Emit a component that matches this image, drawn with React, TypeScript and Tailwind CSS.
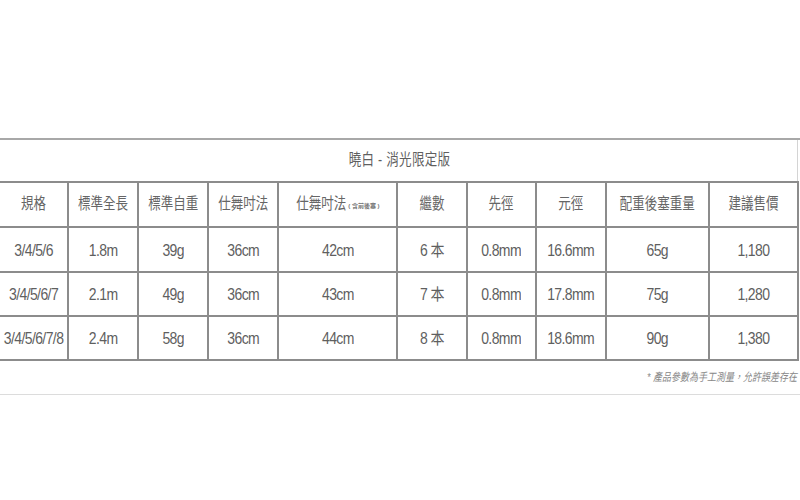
const cols = [68, 70, 70, 70, 119, 69, 69, 70, 103, 89]

const rows = [
  ['3/4/5/6', '1.8m', '39g', '36cm', '42cm', '6 本', '0.8mm', '16.6mm', '65g', '1,180'],
  ['3/4/5/6/7', '2.1m', '49g', '36cm', '43cm', '7 本', '0.8mm', '17.8mm', '75g', '1,280'],
  ['3/4/5/6/7/8', '2.4m', '58g', '36cm', '44cm', '8 本', '0.8mm', '18.6mm', '90g', '1,380'],
]

const headers = ['規格', '標準全長', '標準自重', '仕舞吋法', '仕舞吋法', '繼數', '先徑', '元徑', '配重後塞重量', '建議售價']

const cjk = "'Liberation Sans', 'Noto Sans CJK TC', sans-serif"

function Cell({ children, first }: { children: React.ReactNode; first?: boolean }) {
  return (
    <td
      className={
        'border-b-2 border-[#8c8c8c] text-center align-middle p-0 ' +
        (first ? '' : 'border-l-2')
      }
    >
      {children}
    </td>
  )
}

export default function App() {
  return (
    <div className="w-[800px] h-[500px] bg-white text-[#5f5f5f]" style={{ fontFamily: cjk }}>
      <div className="h-[138px]" />
      <div className="border-t-2 border-[#a8a8a8] w-full" />
      <div className="w-[798px] border-r border-[#d4d4d4] h-[41px] flex items-center justify-center">
        <span className="text-[12.5px] inline-block scale-y-125 tracking-[0.3px] pl-[2px]">曉白 - 消光限定版</span>
      </div>
      <table className="table-fixed border-collapse w-[799px] border-t-2 border-r-2 border-[#8c8c8c]">
        <colgroup>
          {cols.map((w, i) => (
            <col key={i} style={{ width: w }} />
          ))}
        </colgroup>
        <tbody>
          <tr className="h-[45px] text-[12.5px] text-[#666]">
            {headers.map((h, i) => (
              <Cell key={i} first={i === 0}>
                <span className="inline-block scale-y-125">{h}</span>
                {i === 4 && <span className="text-[6px] ml-[2px] font-bold text-[#777]">( 含前後塞 )</span>}
              </Cell>
            ))}
          </tr>
          {rows.map((r, ri) => (
            <tr key={ri} className={ri === 0 ? 'h-[45px]' : 'h-[44px]'}>
              {r.map((v, ci) => (
                <Cell key={ci} first={ci === 0}>
                  <span className="inline-block text-[14px] tracking-[-0.6px] scale-y-115">{v}</span>
                </Cell>
              ))}
            </tr>
          ))}
        </tbody>
      </table>
      <div className="h-[33px] w-[798px] flex items-center justify-end pr-[1px]">
        <span className="italic inline-block text-[9px] scale-y-125 text-[#888]">* 產品參數為手工測量，允許誤差存在</span>
      </div>
      <div className="border-t border-[#dcdcdc] w-full" />
    </div>
  )
}
